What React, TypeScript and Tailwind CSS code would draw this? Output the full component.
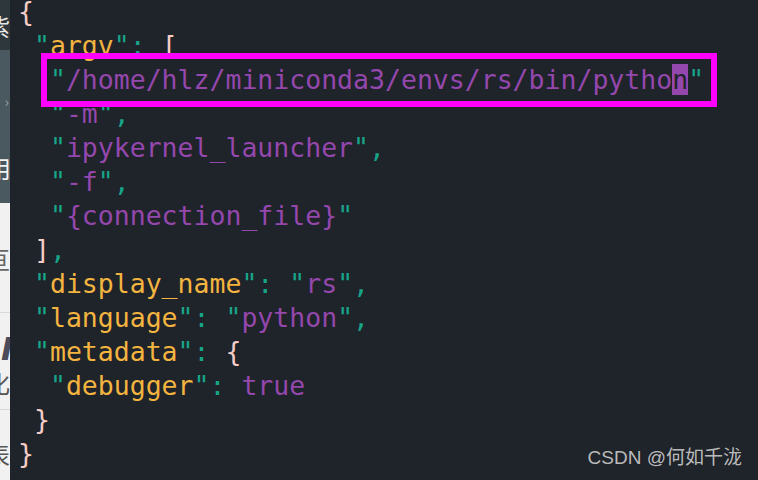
import React from 'react';

type Seg = [string, string];

const P = 'text-[#f6cdc6]'; // braces / brackets
const Q = 'text-[#17a589]'; // quotes, colons, commas
const K = 'text-[#f3b440]'; // keys
const S = 'text-[#9447ad]'; // string values

const lines: Seg[][] = [
  [['{', P]],
  [[' ', P], ['"', Q], ['argv', K], ['":', Q], [' ', Q], ['[', P]],
  [['  ', P], ['"', Q], ['/home/hlz/miniconda3/envs/rs/bin/pytho', S], ['n', 'cursor'], ['"', Q]],
  [['  ', P], ['"', Q], ['-m', S], ['",', Q]],
  [['  ', P], ['"', Q], ['ipykernel_launcher', S], ['",', Q]],
  [['  ', P], ['"', Q], ['-f', S], ['",', Q]],
  [['  ', P], ['"', Q], ['{connection_file}', S], ['"', Q]],
  [[' ', P], [']', P], [',', Q]],
  [[' ', P], ['"', Q], ['display_name', K], ['": "', Q], ['rs', S], ['",', Q]],
  [[' ', P], ['"', Q], ['language', K], ['": "', Q], ['python', S], ['",', Q]],
  [[' ', P], ['"', Q], ['metadata', K], ['": ', Q], ['{', P]],
  [['  ', P], ['"', Q], ['debugger', K], ['": ', Q], ['true', S]],
  [[' ', P], ['}', P]],
  [['}', P]],
];

// Edge of the neighbouring window: only the right-hand sliver of each glyph shows.
function Clip({ children, className }: { children: React.ReactNode; className: string }) {
  return <div className={`flex justify-end whitespace-nowrap ${className}`}>{children}</div>;
}

function SideStrip() {
  return (
    <div className="w-[10px] shrink-0 overflow-hidden flex flex-col font-['Noto_Sans_CJK_SC',sans-serif] leading-none">
      <div className="h-[50px] shrink-0 bg-[#2e373c] pt-[14px]">
        <Clip className="text-[24px] text-[#e8e8e8]">紫</Clip>
      </div>
      <div className="h-[153px] shrink-0 bg-[#4a5960] pt-[44px] flex flex-col gap-[48px]">
        <Clip className="text-[14px] text-[#9aa4a8] pr-[1px]">›</Clip>
        <Clip className="text-[24px] text-[#f2f2f2] -mr-[1px]">用</Clip>
      </div>
      <div className="flex-1 bg-[#f1f1f1] pt-[44px] flex flex-col">
        <Clip className="text-[24px] text-[#666]">亘</Clip>
        <div className="mt-[41px] h-px bg-[#d9d9d9]" />
        <Clip className="mt-[20px] h-[34px] text-[32px] italic font-bold text-[#4b4b5c] font-['DejaVu_Sans',sans-serif] -mr-[3px]">
          I
        </Clip>
        <Clip className="mt-[4px] text-[24px] text-[#555]">化</Clip>
        <div className="mt-[14px] h-px bg-[#d9d9d9]" />
        <Clip className="mt-[32px] text-[24px] text-[#555]">表</Clip>
      </div>
    </div>
  );
}

export default function App() {
  return (
    <div className="relative flex h-[480px] w-[758px] overflow-hidden bg-[#1f232a]">
      <SideStrip />
      <div className="flex-1 pl-[8px] mt-[-5px] font-['DejaVu_Sans_Mono',monospace] text-[26.5px] leading-[34px] whitespace-pre">
        {lines.map((line, i) => (
          <div key={i} className="h-[34px]">
            {line.map(([t, c], j) =>
              c === 'cursor' ? (
                <span key={j} className="bg-[#9447ad] text-[#1f232a]">
                  {t}
                </span>
              ) : (
                <span key={j} className={c}>
                  {t}
                </span>
              )
            )}
          </div>
        ))}
      </div>
      {/* highlight box drawn over the argv path */}
      <div className="absolute left-[41px] top-[53px] h-[54px] w-[676px] border-[6px] border-[#ff00ff]" />
      <div className="absolute right-[16px] bottom-[8px] text-[19px] text-[#cfcfcf]/90 font-['Liberation_Sans','Noto_Sans_CJK_SC',sans-serif]">
        CSDN @何如千泷
      </div>
    </div>
  );
}
